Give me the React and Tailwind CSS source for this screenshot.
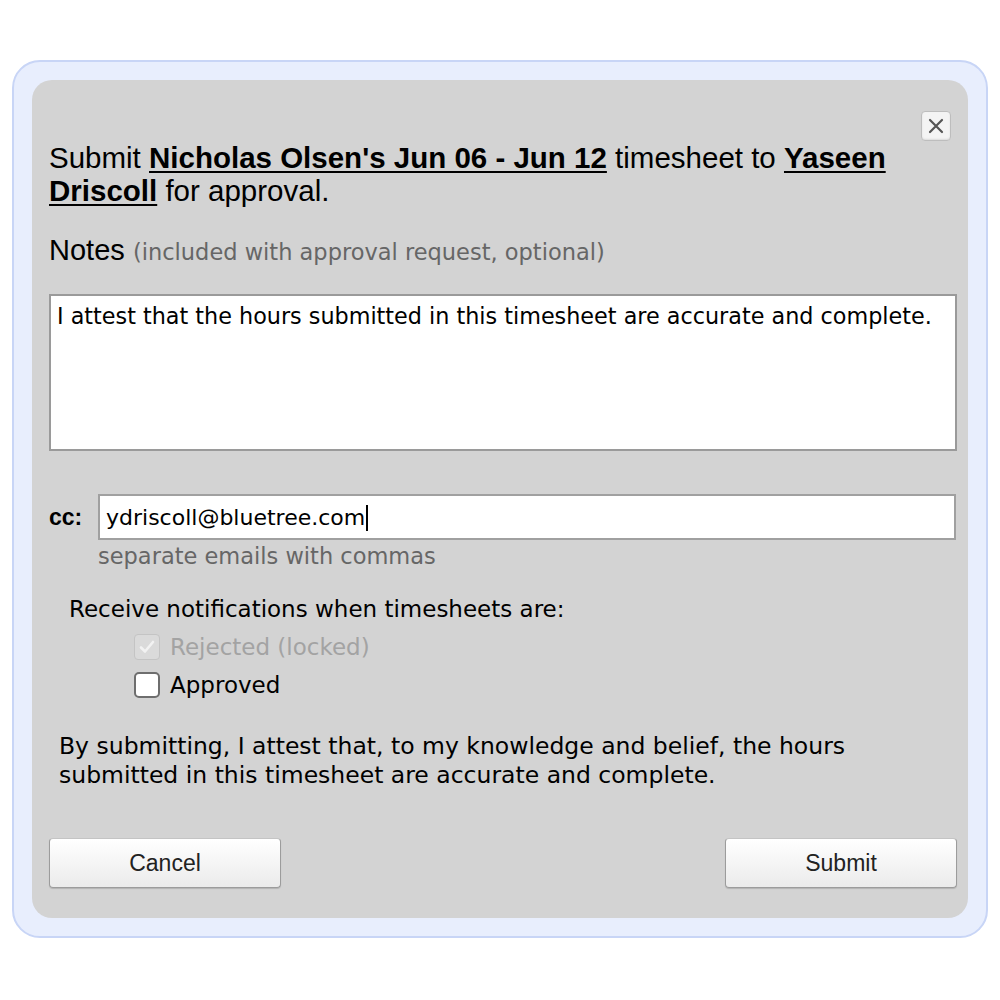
import React, { useState } from "react";

const SubmitTimesheet = () => {
  const [notes, setNotes] = useState(
    "I attest that the hours submitted in this timesheet are accurate and complete."
  );
  const [cc, setCc] = useState("ydriscoll@bluetree.com");
  const [approved, setApproved] = useState(false);

  const verdana = "font-['DejaVu_Sans','Verdana',sans-serif]";
  const arial = "font-['Liberation_Sans','Arial',sans-serif]";
  const btn = `${arial} w-[232px] h-[50px] rounded-[4px] border border-[#9c9c9c] border-t-[#c4c4c4] bg-gradient-to-b from-white to-[#ebebeb] text-[23px] text-[#222] shadow-[0_1px_1px_rgba(0,0,0,0.15)]`;

  return (
    <div className="w-[1000px] h-[1000px] bg-white pt-[60px] px-[12px]">
      <div className="h-[878px] rounded-[28px] bg-[#e8eefd] border-2 border-[#c8d5f6] p-[18px]">
        <div className="h-full rounded-[20px] bg-[#d3d3d3] pl-[17px] pr-[10px] pt-[31px]">
          <div className="flex justify-end pr-[7px]">
            <button className="w-[30px] h-[30px] rounded-[4px] bg-[#f4f4f4] border border-[#bdbdbd] flex items-center justify-center shadow-[inset_0_-1px_2px_rgba(0,0,0,0.1)]">
              <svg width="18" height="18" viewBox="0 0 18 18">
                <path d="M3 3L15 15M15 3L3 15" stroke="#555" strokeWidth="2.2" strokeLinecap="round" />
              </svg>
            </button>
          </div>

          <p className={`${arial} text-[29.5px] leading-[33px] text-black pr-[50px]`}>
            Submit <b className="underline underline-offset-[3px]">Nicholas Olsen's Jun 06 - Jun 12</b> timesheet to{" "}
            <b className="underline underline-offset-[3px]">Yaseen Driscoll</b> for approval.
          </p>

          <p className="mt-[26px] leading-[34px]">
            <span className={`${arial} text-[29px] text-black`}>Notes</span>{" "}
            <span className={`${verdana} ml-[4px] text-[22.5px] text-[#666]`}>(included with approval request, optional)</span>
          </p>

          <textarea
            value={notes}
            onChange={(e) => setNotes(e.target.value)}
            className={`${verdana} mt-[23px] block w-[908px] h-[157px] bg-white border-2 border-[#9a9a9a] px-[6px] pt-[7px] text-[22.3px] leading-[26px] text-black resize-none outline-none`}
          />

          <div className="mt-[43px] flex items-center">
            <span className={`${arial} w-[49px] text-[23px] font-bold text-black`}>cc:</span>
            <div className="relative">
              <input
                value={cc}
                onChange={(e) => setCc(e.target.value)}
                className={`${verdana} block w-[858px] h-[46px] bg-white border-2 border-[#a0a0a0] px-[6px] text-[22px] text-black outline-none caret-transparent`}
              />
              <span className="absolute left-[268px] top-[11px] w-[2px] h-[26px] bg-black" />
            </div>
          </div>
          <p className={`${verdana} ml-[49px] mt-[3px] text-[22.5px] leading-[26px] text-[#666]`}>
            separate emails with commas
          </p>

          <p className={`${verdana} ml-[20px] mt-[26px] text-[23px] leading-[28px] text-black`}>
            Receive notifications when timesheets are:
          </p>
          <div className={`${verdana} ml-[85px] mt-[11px] flex flex-col gap-[12px] text-[23px]`}>
            <label className="flex items-center gap-[10px] text-[#a3a3a3]">
              <span className="w-[26px] h-[26px] rounded-[4px] border border-[#c4c4c4] bg-[#dadada] flex items-center justify-center">
                <svg width="18" height="18" viewBox="0 0 18 18">
                  <path d="M3 9.5L7 13.5L15 4" stroke="#f2f2f2" strokeWidth="2.6" fill="none" strokeLinecap="round" strokeLinejoin="round" />
                </svg>
              </span>
              <span className="leading-[26px]">Rejected (locked)</span>
            </label>
            <label className="flex items-center gap-[10px] text-black cursor-pointer" onClick={() => setApproved(!approved)}>
              <span className="w-[26px] h-[26px] rounded-[5px] border-2 border-[#6e6e6e] bg-white flex items-center justify-center">
                {approved && (
                  <svg width="18" height="18" viewBox="0 0 18 18">
                    <path d="M3 9.5L7 13.5L15 4" stroke="#333" strokeWidth="2.6" fill="none" strokeLinecap="round" strokeLinejoin="round" />
                  </svg>
                )}
              </span>
              <span className="leading-[26px]">Approved</span>
            </label>
          </div>

          <p className={`${verdana} ml-[10px] mt-[34px] text-[23.5px] leading-[29px] text-black w-[830px]`}>
            By submitting, I attest that, to my knowledge and belief, the hours submitted in this timesheet are accurate and complete.
          </p>

          <div className="mt-[48px] flex justify-between w-[908px]">
            <button className={btn}>Cancel</button>
            <button className={btn}>Submit</button>
          </div>
        </div>
      </div>
    </div>
  );
};

export default SubmitTimesheet;
